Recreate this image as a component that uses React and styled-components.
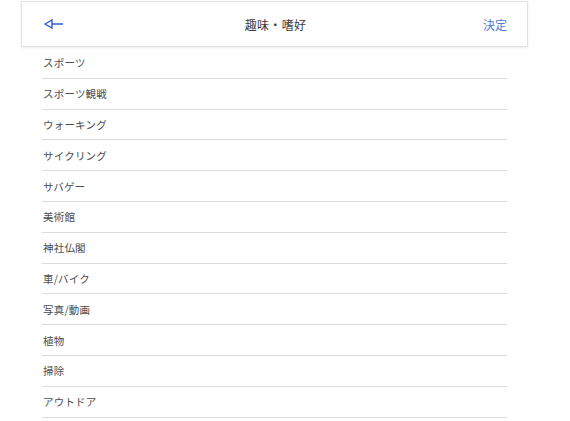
import React from "react"
import styled, { createGlobalStyle } from "styled-components"

const GlobalStyle = createGlobalStyle`
  body {
    margin: 0;
    background: #fff;
    font-family: "Noto Sans CJK JP", "Noto Sans", sans-serif;
  }
`

const Page = styled.div`
  width: 507px;
  margin-left: 21px;
  padding-top: 1px;
`

const Header = styled.div`
  display: flex;
  align-items: center;
  justify-content: space-between;
  height: 46px;
  box-sizing: border-box;
  padding: 0 20px 0 22px;
  border: 1px solid #e2e2e2;
  box-shadow: 0 1px 2px rgba(0, 0, 0, 0.08);
  position: relative;
`

const BackButton = styled.button`
  display: flex;
  align-items: center;
  padding: 0;
  border: none;
  background: none;
  cursor: pointer;
  width: 60px;
`

const Title = styled.h1`
  margin: 0;
  font-size: 12px;
  font-weight: 400;
  color: #3a3a3a;
  letter-spacing: 0.3px;
`

const Confirm = styled.button`
  width: 60px;
  padding: 0;
  border: none;
  background: none;
  text-align: right;
  font-family: inherit;
  font-size: 12px;
  font-weight: 400;
  color: #5079cc;
  cursor: pointer;
`

const List = styled.ul`
  list-style: none;
  margin: 0 21px;
  padding: 0;
  padding-top: 1px;
`

const Row = styled.li`
  height: 30.8px;
  box-sizing: border-box;
  display: flex;
  align-items: center;
  padding-left: 1px;
  border-bottom: 1px solid #dcdcdc;
  font-size: 10.5px;
  font-weight: 400;
  color: #4d4d4d;
  letter-spacing: 0.2px;
`

const hobbies = [
  "スポーツ",
  "スポーツ観戦",
  "ウォーキング",
  "サイクリング",
  "サバゲー",
  "美術館",
  "神社仏閣",
  "車/バイク",
  "写真/動画",
  "植物",
  "掃除",
  "アウトドア",
]

function BackArrow() {
  return (
    <svg width="20" height="10" viewBox="0 0 20 10">
      <path
        d="M1 5 L8 1 L8 9 Z M8 5 L19 5"
        fill="none"
        stroke="#2f5ccf"
        strokeWidth="1.4"
        strokeLinejoin="miter"
      />
    </svg>
  )
}

export default function App() {
  return (
    <>
      <GlobalStyle />
      <Page>
        <Header>
          <BackButton aria-label="戻る">
            <BackArrow />
          </BackButton>
          <Title>趣味・嗜好</Title>
          <Confirm>決定</Confirm>
        </Header>
        <List>
          {hobbies.map((h) => (
            <Row key={h}>{h}</Row>
          ))}
        </List>
      </Page>
    </>
  )
}
